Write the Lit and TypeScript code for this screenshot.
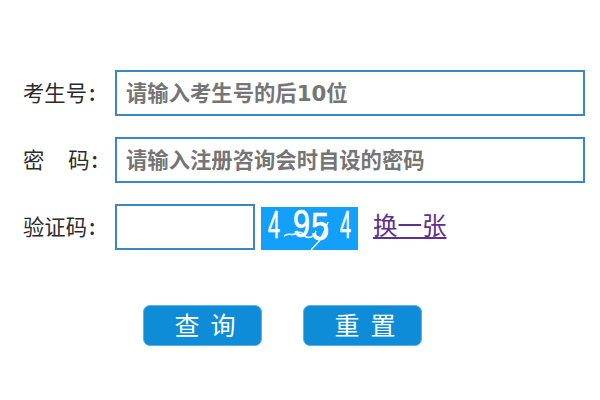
import { LitElement, html, css } from "lit";
import { customElement } from "lit/decorators.js";

@customElement("app-root")
export class AppRoot extends LitElement {
  static styles = css`
    :host { display: block; width: 600px; height: 400px; background: #fff; overflow: hidden;
      font-family: "Noto Sans CJK SC", "Liberation Sans", sans-serif; }
    .form { display: flex; flex-direction: column; padding: 70px 15px 0 23px; gap: 21px; }
    .row { display: flex; align-items: center; height: 46px; }
    .label { width: 92px; flex: none; font-size: 21.33px; color: #2b2b2b; white-space: pre; line-height: 1; padding-bottom: 3px; }
    .colon { margin-left: 2px; font-weight: 500; }
    input { box-sizing: border-box; height: 46px; border: 2px solid #3a87c8; background: #fff; padding: 1px 9px 0 9px;
      font: 700 21.33px "DejaVu Sans", "Noto Sans CJK SC", sans-serif; color: #333; outline: none; margin: 0; }
    input::placeholder { color: #757575; opacity: 1; }
    .wide { width: 470px; }
    .code { width: 140px; }
    .captcha { display: block; width: 97px; height: 43px; margin: 3px 0 0 6px; flex: none; overflow: visible; }
    .captcha text { font: 400 39px "Liberation Sans", sans-serif; fill: #fff; stroke: #fff; stroke-width: .7px; }
    .swap { margin-left: 15px; font-size: 24.5px; line-height: 1; color: #60308c; text-decoration: underline; text-decoration-thickness: 1.5px; text-underline-offset: 2px; white-space: nowrap; padding-bottom: 3px; }
    .buttons { display: flex; gap: 41px; padding: 55px 0 0 143px; }
    button { box-sizing: border-box; width: 119px; height: 41px; border: 1px solid #5cb0e6; border-radius: 7px; background: #0f8cd8;
      color: #fff; font: 400 25px "Noto Sans CJK SC", sans-serif; padding: 0 0 3px 5px; white-space: pre; }
  `;

  render() {
    return html`
      <div class="form">
        <div class="row">
          <span class="label">考生号<span class="colon">:</span></span>
          <input class="wide" placeholder="请输入考生号的后10位" />
        </div>
        <div class="row">
          <span class="label">密     码<span class="colon">:</span></span>
          <input class="wide" placeholder="请输入注册咨询会时自设的密码" />
        </div>
        <div class="row">
          <span class="label">验证码<span class="colon">:</span></span>
          <input class="code" />
          <svg class="captcha" viewBox="0 0 97 43" aria-label="验证码图片">
            <rect width="97" height="43" fill="#12a0fa"></rect>
            <text x="7" y="31" textLength="12" lengthAdjust="spacingAndGlyphs">4</text>
            <text x="32" y="30" textLength="17" lengthAdjust="spacingAndGlyphs">9</text>
            <text x="50" y="33" textLength="18" lengthAdjust="spacingAndGlyphs">5</text>
            <text x="79" y="31" textLength="11" lengthAdjust="spacingAndGlyphs">4</text>
            <path d="M23 29c5-4 7 0 11-2s6-3 8 0 5 4 8 3 4-2 5-6M50 43c4-5 9-8 11-14 2-4 4-8 6-14" fill="none" stroke="#fff" stroke-width="1.4"></path>
          </svg>
          <a class="swap">换一张</a>
        </div>
      </div>
      <div class="buttons">
        <button>查  询</button>
        <button>重  置</button>
      </div>
    `;
  }
}
